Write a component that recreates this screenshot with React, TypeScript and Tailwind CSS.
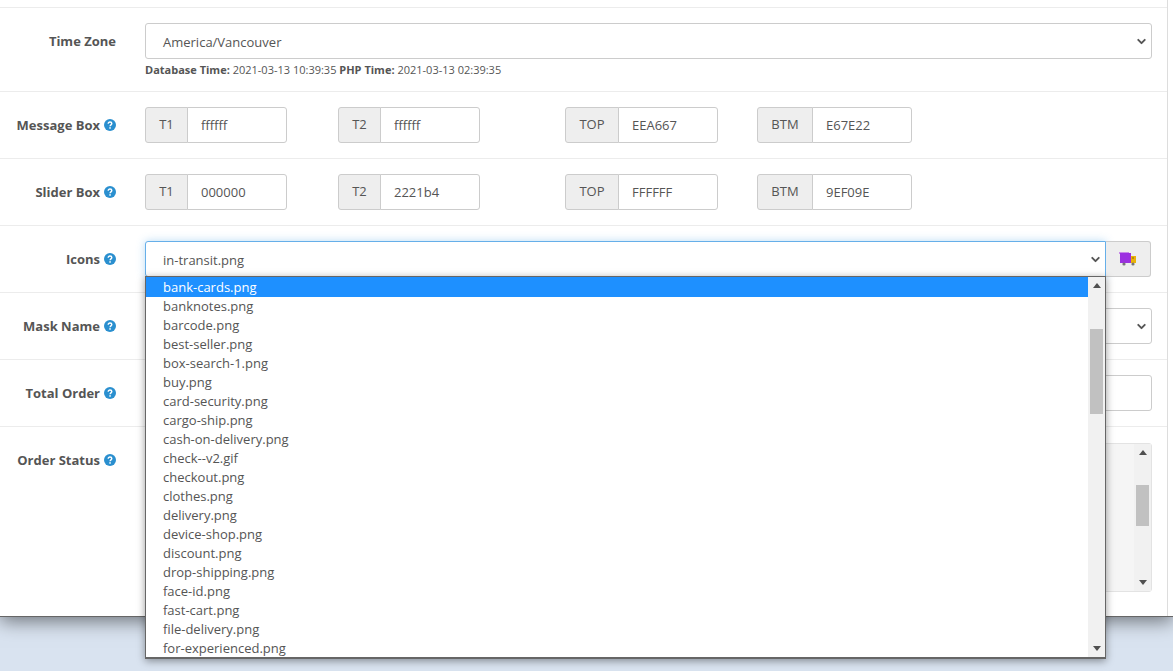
import { ChevronDown } from 'lucide-react'

const options = [
  'bank-cards.png',
  'banknotes.png',
  'barcode.png',
  'best-seller.png',
  'box-search-1.png',
  'buy.png',
  'card-security.png',
  'cargo-ship.png',
  'cash-on-delivery.png',
  'check--v2.gif',
  'checkout.png',
  'clothes.png',
  'delivery.png',
  'device-shop.png',
  'discount.png',
  'drop-shipping.png',
  'face-id.png',
  'fast-cart.png',
  'file-delivery.png',
  'for-experienced.png',
]

function Help() {
  return (
    <svg viewBox="0 0 12 12" className="ml-[4px] mt-[-1px] h-[12px] w-[12px] shrink-0">
      <circle cx="6" cy="6" r="6" fill="#2a8fcf" />
      <path d="M4.2 4.7c0-1 .8-1.7 1.8-1.7s1.8.7 1.8 1.6c0 1.3-1.7 1.3-1.7 2.6" fill="none" stroke="#fff" strokeWidth="1.4" />
      <rect x="5.3" y="8.2" width="1.5" height="1.5" fill="#fff" />
    </svg>
  )
}

function Row({ label, help = true, height, children }: { label: string; help?: boolean; height: string; children: React.ReactNode }) {
  return (
    <div className={`flex border-b border-[#ececec] ${height}`}>
      <div className="flex h-[67px] w-[145px] shrink-0 items-center justify-end pr-[29px] text-[13px] font-bold text-[#555]">
        {label}
        {help && <Help />}
      </div>
      <div className="relative min-w-0 flex-1 pr-[15px] pt-[15px]">{children}</div>
    </div>
  )
}

function Addon({ label, value, addon, width, className }: { label: string; value: string; addon: string; width: string; className?: string }) {
  return (
    <div className={`flex h-[36px] shrink-0 ${width} ${className ?? ''}`}>
      <span className={`flex items-center justify-center rounded-l-[3px] border border-[#ccc] bg-[#eee] text-[13px] text-[#555] ${addon}`}>{label}</span>
      <input readOnly value={value} className="-ml-px min-w-0 flex-1 rounded-r-[3px] border border-[#ccc] bg-white pl-[13px] pt-[2px] text-[13px] text-[#555] outline-none" />
    </div>
  )
}

function ColorRow({ label, t1, t2, top, btm }: { label: string; t1: string; t2: string; top: string; btm: string }) {
  return (
    <Row label={label} height="h-[67px]">
      <div className="flex">
        <Addon label="T1" value={t1} addon="w-[43px]" width="w-[142px]" />
        <Addon label="T2" value={t2} addon="w-[43px]" width="w-[142px]" className="ml-[51px]" />
        <Addon label="TOP" value={top} addon="w-[54px]" width="w-[153px]" className="ml-[85px]" />
        <Addon label="BTM" value={btm} addon="w-[56px]" width="w-[155px]" className="ml-[39px]" />
      </div>
    </Row>
  )
}

function SelectBox({ value, className }: { value: string; className?: string }) {
  return (
    <div className={`flex h-[36px] items-center justify-between rounded-[3px] border bg-white pl-[17px] pr-[3px] text-[13px] text-[#555] ${className ?? 'border-[#ccc]'}`}>
      <span className="pt-[3px]">{value}</span>
      <ChevronDown size={13} strokeWidth={3.5} className="text-[#555]" />
    </div>
  )
}

function Arrow({ up }: { up?: boolean }) {
  return (
    <svg viewBox="0 0 8 5" className="h-[5px] w-[8px] fill-[#505050]">
      <path d={up ? 'M4 0l4 5H0z' : 'M4 5L0 0h8z'} />
    </svg>
  )
}

function Scrollbar({ thumbTop, thumbHeight }: { thumbTop: string; thumbHeight: string }) {
  return (
    <div className="relative flex h-full w-[17px] shrink-0 flex-col items-center justify-between bg-[#f1f1f1] py-[6px]">
      <Arrow up />
      <div className={`absolute left-[2px] w-[13px] bg-[#c1c1c1] ${thumbTop} ${thumbHeight}`} />
      <Arrow />
    </div>
  )
}

export default function App() {
  return (
    <div className="h-[671px] w-[1173px] overflow-hidden bg-[#d9e3f0] font-['Open_Sans',sans-serif]">
      <div className="h-[617px] border-b border-[#666] bg-white shadow-[0_4px_18px_rgba(0,0,0,0.5)]">
        <div className="h-full w-[1168px] border-r border-[#ddd]">
          <div className="h-[8px] border-b border-[#ececec]" />

          <Row label="Time Zone" help={false} height="h-[84px]">
            <SelectBox value="America/Vancouver" />
            <p className="mt-[3px] text-[11px] leading-[15px] text-[#555]">
              <b>Database Time:</b> 2021-03-13 10:39:35 <b>PHP Time:</b> 2021-03-13 02:39:35
            </p>
          </Row>

          <ColorRow label="Message Box" t1="ffffff" t2="ffffff" top="EEA667" btm="E67E22" />
          <ColorRow label="Slider Box" t1="000000" t2="2221b4" top="FFFFFF" btm="9EF09E" />

          <Row label="Icons" height="h-[67px]">
            <div className="flex">
              <SelectBox
                value="in-transit.png"
                className="flex-1 rounded-r-none border-[#66afe9] shadow-[0_0_8px_rgba(102,175,233,0.45)]"
              />
              <div className="mr-px flex h-[36px] w-[45px] items-center justify-center rounded-r-[3px] border border-l-0 border-[#ccc] bg-[#eee]">
                <svg viewBox="0 0 18 14" className="h-[14px] w-[18px]">
                  <rect x="0" y="0" width="10" height="2" fill="#c88ae8" />
                  <rect x="1" y="1" width="11" height="10" fill="#9b30e0" />
                  <rect x="12" y="4" width="5" height="7" fill="#eab308" />
                  <rect x="13" y="5" width="2" height="2" fill="#b98a10" />
                  <circle cx="5" cy="12" r="1.6" fill="#777" />
                  <circle cx="14" cy="12" r="1.6" fill="#777" />
                </svg>
              </div>
            </div>

            {/* open select list */}
            <div className="absolute left-0 top-[50px] z-10 flex h-[383px] w-[961px] border border-b-2 border-[#666] bg-white shadow-[0_2px_8px_rgba(0,0,0,0.4)]">
              <ul className="min-w-0 flex-1 overflow-hidden text-[13px] leading-[19px] text-[#555]">
                {options.map((name, i) => (
                  <li key={name} className={`pl-[17px] ${i === 0 ? 'h-[20px] bg-[#1e90ff] pt-px text-white' : 'h-[19px]'}`}>
                    {name}
                  </li>
                ))}
              </ul>
              <Scrollbar thumbTop="top-[52px]" thumbHeight="h-[85px]" />
            </div>
          </Row>

          <Row label="Mask Name" height="h-[67px]">
            <SelectBox value="" />
          </Row>

          <Row label="Total Order" height="h-[67px]">
            <div className="h-[36px] rounded-[3px] border border-[#ccc] bg-white" />
          </Row>

          <div className="flex h-[189px]">
            <div className="flex h-[67px] w-[145px] shrink-0 items-center justify-end pr-[29px] text-[13px] font-bold text-[#555]">
              Order Status
              <Help />
            </div>
            <div className="min-w-0 flex-1 pr-[15px] pt-[16px]">
              <div className="flex h-[149px] justify-end rounded-[3px] border border-[#e3e3e3] bg-[#f5f5f5]">
                <Scrollbar thumbTop="top-[41px]" thumbHeight="h-[41px]" />
              </div>
            </div>
          </div>
        </div>
      </div>
    </div>
  )
}
